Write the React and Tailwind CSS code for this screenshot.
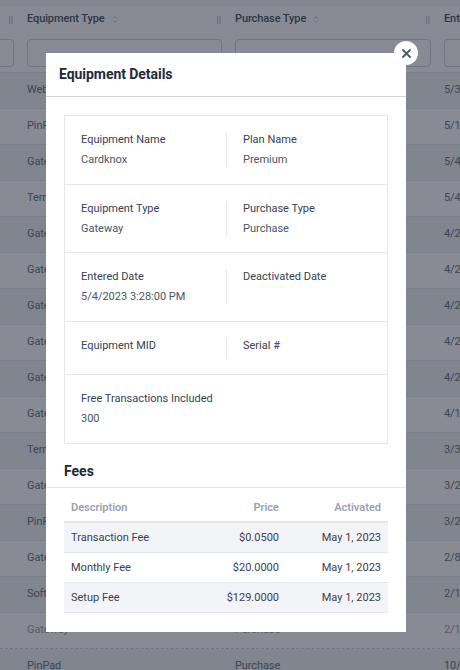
import React from "react";

const rows = [
  ["Webhook", "Purchase", "5/3/2023"],
  ["PinPad", "Purchase", "5/1/2023"],
  ["Gateway", "Purchase", "5/4/2023"],
  ["Terminal", "Purchase", "5/4/2023"],
  ["Gateway", "Purchase", "4/27/2023"],
  ["Gateway", "Purchase", "4/26/2023"],
  ["Gateway", "Purchase", "4/25/2023"],
  ["Gateway", "Purchase", "4/24/2023"],
  ["Gateway", "Purchase", "4/21/2023"],
  ["Gateway", "Purchase", "4/18/2023"],
  ["Terminal", "Purchase", "3/30/2023"],
  ["Gateway", "Purchase", "3/28/2023"],
  ["PinPad", "Purchase", "3/22/2023"],
  ["Gateway", "Purchase", "2/8/2023"],
  ["Software", "Purchase", "2/14/2023"],
  ["Gateway", "Purchase", "2/10/2023"],
  ["PinPad", "Purchase", "10/5/2022"],
];

function Grip() {
  return (
    <svg width="4" height="8" viewBox="0 0 4 8" className="shrink-0">
      <rect x="0" y="0" width="1.2" height="8" fill="#c4c8cf" />
      <rect x="2.4" y="0" width="1.2" height="8" fill="#c4c8cf" />
    </svg>
  );
}

function Sort() {
  return (
    <svg width="6" height="9" viewBox="0 0 6 9" className="shrink-0">
      <path d="M1.2 3.4 L3 1.6 L4.8 3.4" fill="none" stroke="#c0c4cb" strokeWidth="1" />
      <path d="M1.2 5.6 L3 7.4 L4.8 5.6" fill="none" stroke="#c0c4cb" strokeWidth="1" />
    </svg>
  );
}

function Background() {
  return (
    <div className="flex flex-col text-[11px] tracking-[-0.1px]">
      <div className="h-[6px] bg-gray-100" />
      <div className="grid h-[27px] grid-cols-[14px_208px_209px_1fr] items-center font-medium text-gray-600">
        <div className="flex justify-end pr-[1px]">
          <Grip />
        </div>
        <div className="flex items-center pl-[13px] pr-[1px]">
          <span>Equipment Type</span>
          <span className="ml-[7px]">
            <Sort />
          </span>
          <span className="ml-auto">
            <Grip />
          </span>
        </div>
        <div className="flex items-center pl-[13px] pr-[1px]">
          <span>Purchase Type</span>
          <span className="ml-[7px]">
            <Sort />
          </span>
          <span className="ml-auto">
            <Grip />
          </span>
        </div>
        <div className="overflow-hidden whitespace-nowrap pl-[13px]">Ente</div>
      </div>
      <div className="grid h-[40px] grid-cols-[14px_208px_209px_1fr] items-start border-b border-gray-200 pt-[6px]">
        <div className="h-[28px] rounded-r-[4px] border border-l-0 border-gray-300" />
        <div className="ml-[13px] h-[28px] rounded-[4px] border border-gray-300" />
        <div className="ml-[13px] h-[28px] rounded-[4px] border border-gray-300" />
        <div className="ml-[13px] h-[28px] rounded-l-[4px] border border-r-0 border-gray-300" />
      </div>
      {rows.map((r, i) => (
        <div
          key={i}
          className={`grid h-[36px] grid-cols-[14px_208px_209px_1fr] items-center border-b ${
            i === 15 ? "border-dashed border-gray-300 text-gray-400" : "border-gray-200 text-gray-500"
          } ${i % 2 === 0 ? "bg-[#f1f2f4]" : "bg-white"}`}
        >
          <div />
          <div className="whitespace-nowrap pl-[13px]">{r[0]}</div>
          <div className="whitespace-nowrap pl-[13px]">{r[1]}</div>
          <div className="overflow-hidden whitespace-nowrap pl-[13px]">{r[2].slice(0, 3)}</div>
        </div>
      ))}
    </div>
  );
}

function Field({ label, value, right, minH }) {
  return (
    <div className={right ? "border-l border-gray-200 pl-[16px]" : "pl-[16px]"}>
      <div className={minH ? "min-h-[20px]" : ""}>
        <div className="text-[11px] leading-[14px] text-gray-700">{label}</div>
        {value !== undefined && (
          <div className="mt-[6px] min-h-[14px] text-[11px] leading-[14px] text-gray-600">{value}</div>
        )}
      </div>
    </div>
  );
}

function Modal() {
  const fees = [
    ["Transaction Fee", "$0.0500", "May 1, 2023"],
    ["Monthly Fee", "$20.0000", "May 1, 2023"],
    ["Setup Fee", "$129.0000", "May 1, 2023"],
  ];
  return (
    <div className="absolute left-[46px] top-[53px] w-[360px] bg-white">
      <div className="flex h-[44px] items-center border-b border-gray-300 px-[13px]">
        <h2 className="text-[14px] font-bold tracking-[-0.05px] text-gray-800">Equipment Details</h2>
      </div>
      <div className="px-[18px] pb-[19px] pt-[18px]">
        <div className="border border-gray-200">
          <div className="grid grid-cols-[161px_1fr] border-b border-gray-200 pb-[17px] pt-[17px]">
            <Field label="Equipment Name" value="Cardknox" />
            <Field label="Plan Name" value="Premium" right />
          </div>
          <div className="grid grid-cols-[161px_1fr] border-b border-gray-200 pb-[16px] pt-[17px]">
            <Field label="Equipment Type" value="Gateway" />
            <Field label="Purchase Type" value="Purchase" right />
          </div>
          <div className="grid grid-cols-[161px_1fr] border-b border-gray-200 pb-[17px] pt-[17px]">
            <Field label="Entered Date" value="5/4/2023 3:28:00 PM" />
            <Field label="Deactivated Date" value="" right />
          </div>
          <div className="grid grid-cols-[161px_1fr] border-b border-gray-200 pb-[15px] pt-[17px]">
            <Field label="Equipment MID" minH />
            <Field label="Serial #" right minH />
          </div>
          <div className="grid grid-cols-[161px_1fr] pb-[17px] pt-[17px]">
            <Field label="Free Transactions Included" value="300" />
            <div />
          </div>
        </div>
        <div className="-mx-[18px] mt-[18px] border-b border-gray-200 px-[18px] pb-[7px]">
          <h3 className="text-[14px] font-bold leading-[18px] text-gray-800">Fees</h3>
        </div>
        <div className="text-[11px]">
          <div className="grid h-[35px] grid-cols-[1fr_86px_102px] items-center border-b-2 border-gray-200 pt-[8px] font-semibold text-gray-400">
            <div className="px-[7px]">Description</div>
            <div className="px-[7px] text-right">Price</div>
            <div className="px-[7px] text-right">Activated</div>
          </div>
          {fees.map((f, i) => (
            <div
              key={i}
              className={`grid h-[30px] grid-cols-[1fr_86px_102px] items-center border-b border-gray-200 pt-[2px] text-gray-700 ${
                i % 2 === 0 ? "bg-[#f3f4f7]" : "bg-white"
              }`}
            >
              <div className="px-[7px]">{f[0]}</div>
              <div className="px-[7px] text-right">{f[1]}</div>
              <div className="px-[7px] text-right">{f[2]}</div>
            </div>
          ))}
        </div>
      </div>
      <button className="absolute -right-[12px] -top-[12px] flex h-[24px] w-[24px] items-center justify-center rounded-full bg-white">
        <svg width="9" height="9" viewBox="0 0 9 9">
          <path d="M1 1 L8 8 M8 1 L1 8" stroke="#4b5563" strokeWidth="1.8" strokeLinecap="round" />
        </svg>
      </button>
    </div>
  );
}

export default function App() {
  return (
    <div className="relative h-[670px] w-[460px] overflow-hidden bg-white font-['Roboto',sans-serif]">
      <Background />
      <div className="absolute inset-0 bg-[rgba(17,24,39,0.5)]" />
      <Modal />
    </div>
  );
}
